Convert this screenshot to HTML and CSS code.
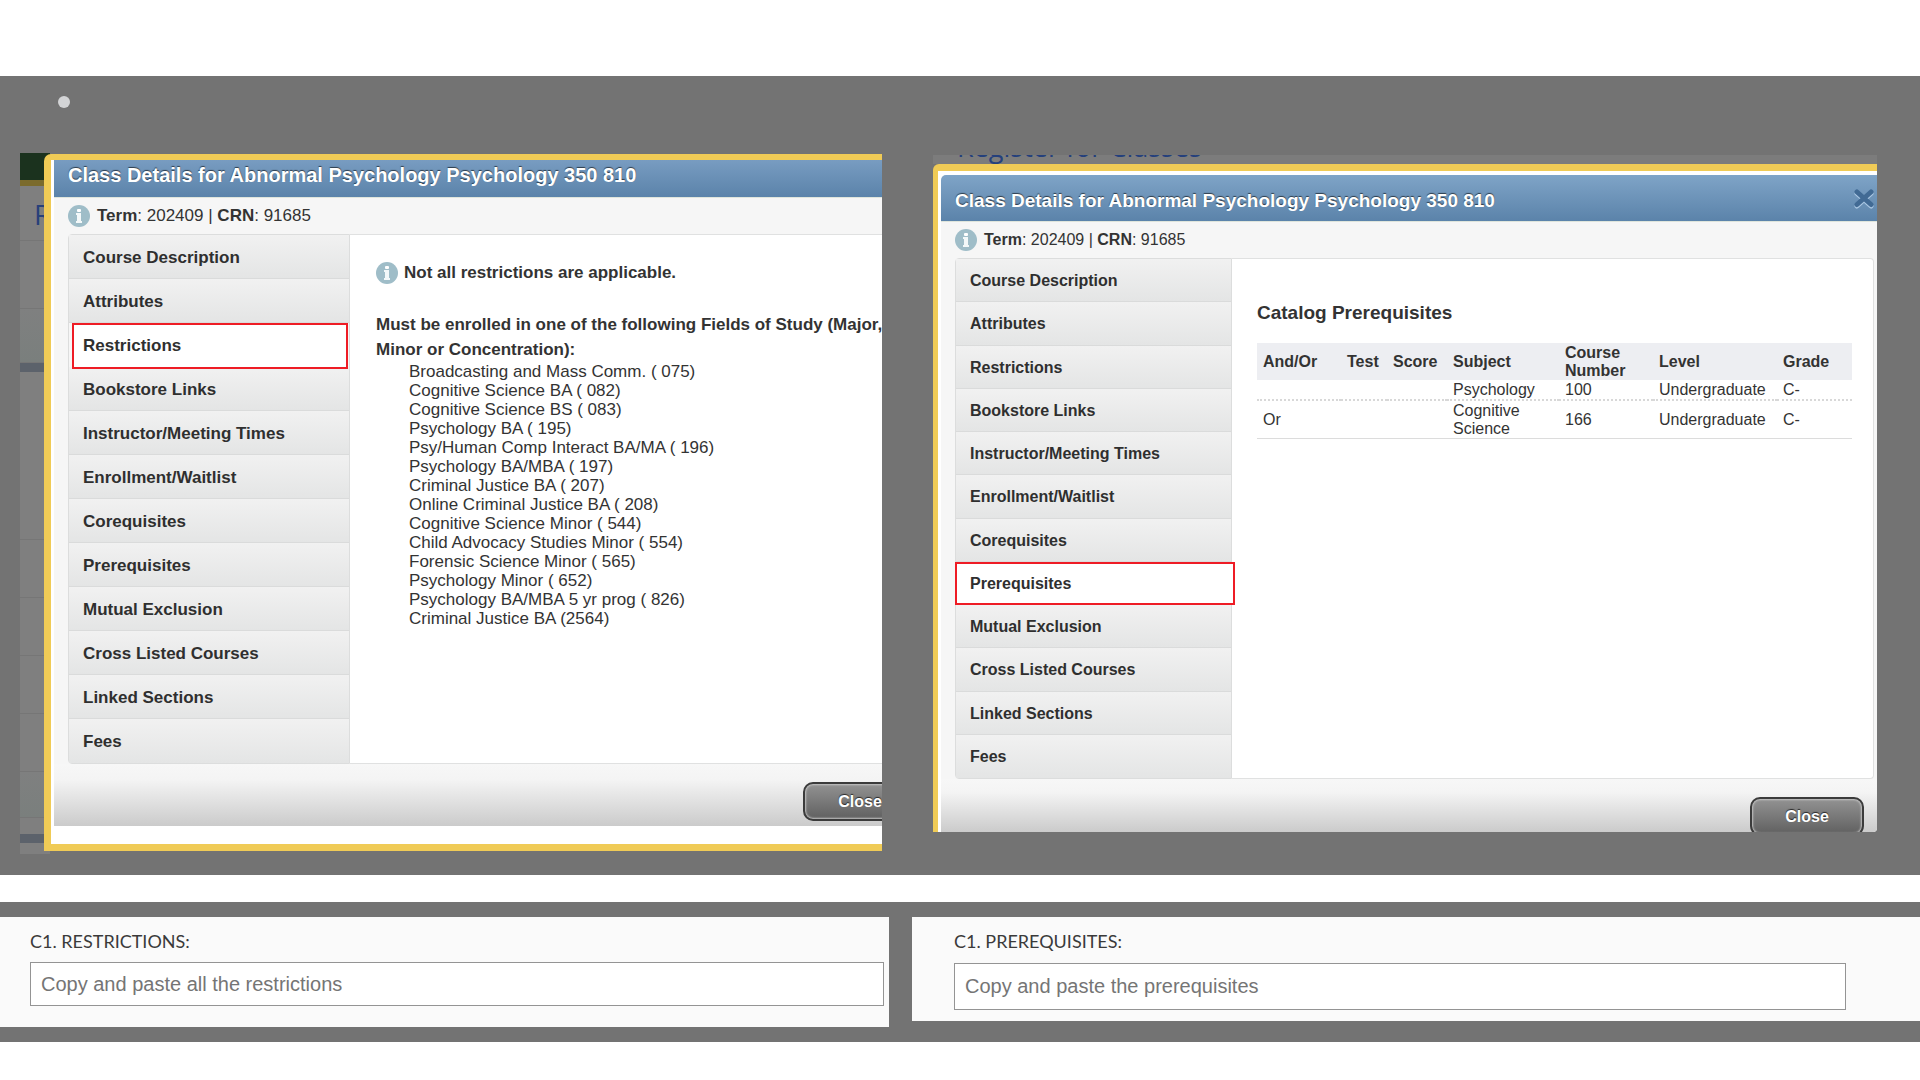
FILE: index.html
```
<!DOCTYPE html>
<html lang="en">
<head>
    <meta charset="UTF-8">
    <meta name="viewport" content="width=device-width, initial-scale=1.0">
    <title>Class Details - Restrictions and Prerequisites</title>
    <link rel="stylesheet" href="styles.css">
</head>
<body>
    <svg class="defs" width="0" height="0" aria-hidden="true">
        <symbol id="info" viewBox="0 0 22 22">
            <circle cx="11" cy="11" r="11" fill="#9fbdc8"/>
            <rect x="9" y="4" width="4" height="3" rx="1" fill="#fff"/>
            <path d="M8 8h5v8h1v2H8v-2h1v-6H8z" fill="#f3f8f9"/>
        </symbol>
    </svg>

    <main>
        <section class="band details">
            <div class="bullet-row"><span class="bullet"></span></div>

            <div class="shots">
                <!-- Restrictions -->
                <div class="shot shot-left">
                    <div class="backdrop" aria-hidden="true">
                        <div class="bd-top"></div>
                        <div class="bd-title">R</div>
                        <div class="bd-row bd-68"></div>
                        <div class="bd-row bd-55 tint"></div>
                        <div class="bd-bar"></div>
                        <div class="bd-row bd-168"></div>
                        <div class="bd-row bd-58"></div>
                        <div class="bd-row bd-58"></div>
                        <div class="bd-row bd-58"></div>
                        <div class="bd-row bd-58"></div>
                        <div class="bd-row bd-46 tint"></div>
                        <div class="bd-gap"></div>
                        <div class="bd-bar"></div>
                    </div>
                    <div class="dialog">
                        <header class="dialog-header">
                            <h2>Class Details for Abnormal Psychology Psychology 350 810</h2>
                        </header>
                        <p class="term"><svg class="info"><use href="#info"/></svg><span><b>Term</b>: 202409 | <b>CRN</b>: 91685</span></p>
                        <div class="dialog-body">
                            <nav class="tabs">
                                <a href="#">Course Description</a>
                                <a href="#">Attributes</a>
                                <a href="#" class="active">Restrictions</a>
                                <a href="#">Bookstore Links</a>
                                <a href="#">Instructor/Meeting Times</a>
                                <a href="#">Enrollment/Waitlist</a>
                                <a href="#">Corequisites</a>
                                <a href="#">Prerequisites</a>
                                <a href="#">Mutual Exclusion</a>
                                <a href="#">Cross Listed Courses</a>
                                <a href="#">Linked Sections</a>
                                <a href="#">Fees</a>
                            </nav>
                            <div class="panel">
                                <p class="notice"><svg class="info"><use href="#info"/></svg><b>Not all restrictions are applicable.</b></p>
                                <p class="rule">Must be enrolled in one of the following Fields of Study (Major, Minor or Concentration):</p>
                                <ul class="fields">
                                    <li>Broadcasting and Mass Comm. ( 075)</li>
                                    <li>Cognitive Science BA ( 082)</li>
                                    <li>Cognitive Science BS ( 083)</li>
                                    <li>Psychology BA ( 195)</li>
                                    <li>Psy/Human Comp Interact BA/MA ( 196)</li>
                                    <li>Psychology BA/MBA ( 197)</li>
                                    <li>Criminal Justice BA ( 207)</li>
                                    <li>Online Criminal Justice BA ( 208)</li>
                                    <li>Cognitive Science Minor ( 544)</li>
                                    <li>Child Advocacy Studies Minor ( 554)</li>
                                    <li>Forensic Science Minor ( 565)</li>
                                    <li>Psychology Minor ( 652)</li>
                                    <li>Psychology BA/MBA 5 yr prog ( 826)</li>
                                    <li>Criminal Justice BA (2564)</li>
                                </ul>
                            </div>
                        </div>
                        <footer class="dialog-footer"><button type="button" class="btn">Close</button></footer>
                    </div>
                </div>

                <!-- Prerequisites -->
                <div class="shot shot-right">
                    <div class="page-title">Register for Classes</div>
                    <div class="dialog">
                        <header class="dialog-header">
                            <h2>Class Details for Abnormal Psychology Psychology 350 810</h2>
                            <button type="button" class="close-x" aria-label="Close dialog">
                                <svg width="20" height="20" viewBox="0 0 20 20" fill="none" stroke-width="5" stroke-linecap="round">
                                    <path d="M3 4.500l14 12.500M17 4.500l-14 12.500" stroke="#a9c6e2"/>
                                    <path d="M3 3l14 12.500M17 3l-14 12.500" stroke="#416a94"/>
                                </svg>
                            </button>
                        </header>
                        <p class="term"><svg class="info"><use href="#info"/></svg><span><b>Term</b>: 202409 | <b>CRN</b>: 91685</span></p>
                        <div class="dialog-body">
                            <nav class="tabs">
                                <a href="#">Course Description</a>
                                <a href="#">Attributes</a>
                                <a href="#">Restrictions</a>
                                <a href="#">Bookstore Links</a>
                                <a href="#">Instructor/Meeting Times</a>
                                <a href="#">Enrollment/Waitlist</a>
                                <a href="#">Corequisites</a>
                                <a href="#" class="active">Prerequisites</a>
                                <a href="#">Mutual Exclusion</a>
                                <a href="#">Cross Listed Courses</a>
                                <a href="#">Linked Sections</a>
                                <a href="#">Fees</a>
                            </nav>
                            <div class="panel">
                                <h3>Catalog Prerequisites</h3>
                                <table class="prereqs">
                                    <colgroup>
                                        <col class="c-andor"><col class="c-test"><col class="c-score"><col class="c-subject"><col class="c-number"><col class="c-level"><col>
                                    </colgroup>
                                    <thead>
                                        <tr><th>And/Or</th><th>Test</th><th>Score</th><th>Subject</th><th>Course Number</th><th>Level</th><th>Grade</th></tr>
                                    </thead>
                                    <tbody>
                                        <tr><td></td><td></td><td></td><td>Psychology</td><td>100</td><td>Undergraduate</td><td>C-</td></tr>
                                        <tr><td>Or</td><td></td><td></td><td>Cognitive Science</td><td>166</td><td>Undergraduate</td><td>C-</td></tr>
                                    </tbody>
                                </table>
                            </div>
                        </div>
                        <footer class="dialog-footer"><button type="button" class="btn">Close</button></footer>
                    </div>
                </div>
            </div>
        </section>

        <form class="band fields-band">
            <div class="card card-left">
                <label for="restrictions">C1. RESTRICTIONS:</label>
                <input type="text" id="restrictions" placeholder="Copy and paste all the restrictions">
            </div>
            <div class="card card-right">
                <label for="prerequisites">C1. PREREQUISITES:</label>
                <input type="text" id="prerequisites" placeholder="Copy and paste the prerequisites">
            </div>
        </form>
    </main>
</body>
</html>
```
FILE: styles.css
```
* {
    box-sizing: border-box;
}
body {
    margin: 0;
    background: #fff;
    color: #333;
    font-family: "Liberation Sans", Arial, sans-serif;
    font-size: 16px;
}
h2, h3, p, ul {
    margin: 0;
    padding: 0;
}
.defs {
    display: block;
}
main {
    padding-top: 76px;
}
.band {
    background: #737373;
}
.details {
    padding: 0 43px 21px 20px;
    margin-bottom: 27px;
}
.bullet-row {
    height: 77px;
    padding: 20px 0 0 38px;
}
.bullet {
    display: block;
    width: 12px;
    height: 12px;
    border-radius: 50%;
    background: #d3d4d6;
}
.shots {
    display: grid;
    grid-template-columns: 862fr 944fr;
    gap: 51px;
    align-items: start;
}
.shot {
    overflow: hidden;
    min-width: 0;
}
.shot-left {
    display: flex;
    align-items: flex-start;
    font-size: 17px;
}
.shot-right {
    margin-top: 2px;
    border-radius: 0 0 4px 0;
}

/* dimmed page behind the left dialog */
.backdrop {
    flex: 0 0 30px;
    min-width: 0;
    background: #7f7f7f;
    padding-bottom: 11px;
}
.bd-top {
    height: 33px;
    background: #1b321e;
    border-bottom: 6px solid #7b6b2d;
}
.bd-title {
    height: 55px;
    padding: 9px 0 0 14px;
    border-bottom: 1px solid #767676;
    font: 28px/38px "Open Sans", sans-serif;
    color: #27407a;
}
.bd-row {
    border-bottom: 1px solid #767676;
}
.bd-68 { height: 68px; }
.bd-55 { height: 54px; }
.bd-168 { height: 168px; }
.bd-58 { height: 58px; }
.bd-46 { height: 46px; }
.bd-gap { height: 16px; }
.tint {
    background: linear-gradient(#7f8080, #7a7f7d);
}
.bd-bar {
    height: 9px;
    background: #5c626b;
}

/* dialog */
.dialog {
    border: 0 solid #f0cb56;
    background: #fff;
}
.shot-left .dialog {
    flex: none;
    width: calc(100% + 30px);
    margin: 1px 0 0 -6px;
    border-width: 6px 0 7px 7px;
    border-radius: 7px 0 0 0;
    padding: 0 0 18px 3px;
}
.shot-right .dialog {
    border-width: 7px 0 0 5px;
    border-radius: 6px 0 0 0;
    padding: 4px 0 0 3px;
}
.dialog-header {
    display: flex;
    justify-content: space-between;
    align-items: flex-start;
    padding: 0 3px 0 14px;
    border-bottom: 1px solid #dfe5dc;
    background: linear-gradient(#7fa4c7, #5b83aa);
    color: #fff;
}
.dialog-header h2 {
    font-size: 20px;
    line-height: 24px;
    text-shadow: 0 -1px 1px rgba(0, 0, 0, 0.6);
    white-space: nowrap;
}
.shot-left .dialog-header {
    height: 38px;
    padding-top: 3px;
    background: linear-gradient(#789cc1, #5b83aa);
}
.shot-right .dialog-header {
    height: 47px;
    padding-top: 14px;
    border-radius: 5px 0 0 0;
}
.shot-right .dialog-header h2 {
    font-size: 19px;
}
.close-x {
    padding: 0;
    border: 0;
    background: none;
    cursor: pointer;
}
.close-x svg {
    display: block;
}
.term {
    display: flex;
    align-items: center;
    gap: 7px;
    height: 36px;
    padding-left: 14px;
    background: #f6f6f6;
}
.info {
    flex: none;
    width: 22px;
    height: 22px;
}
.dialog-body {
    display: flex;
    padding-left: 14px;
    background: #f6f6f6;
}
.shot-right .dialog-body {
    padding-right: 3px;
}
.tabs {
    display: grid;
    grid-auto-rows: 1fr;
    flex: none;
    border: 1px solid #dcdddd;
    border-radius: 4px 0 0 4px;
}
.shot-left .tabs {
    width: 282px;
    height: 530px;
}
.shot-right .tabs {
    width: 277px;
    height: 521px;
}
.tabs a {
    display: flex;
    align-items: center;
    padding: 2px 0 0 14px;
    border-bottom: 1px solid #dadbdb;
    background: linear-gradient(#f1f1f1, #e4e5e5);
    color: #2f2f2f;
    font-weight: bold;
    text-decoration: none;
}
.tabs a:last-child {
    border-bottom: 0;
}
/* the outline runs over the neighbouring tab and the panel edge */
.tabs .active {
    position: relative;
    z-index: 1;
    border: 2px solid #ee1c25;
    background: #fff;
}
.shot-left .tabs .active {
    margin: 0 1px -2px 3px;
    padding: 0 0 0 9px;
}
.shot-right .tabs .active {
    margin: 0 -4px 0 -1px;
    padding-left: 13px;
}
.panel {
    flex: 1;
    border: 1px solid #e0e1e1;
    border-left: 0;
    background: #fff;
}
.shot-left .panel {
    padding: 24px 0 0 26px;
}
.shot-right .panel {
    padding: 42px 21px 0 25px;
    border-radius: 0 4px 4px 0;
}

/* restrictions */
.notice {
    display: flex;
    align-items: center;
    gap: 6px;
    height: 28px;
    margin-bottom: 25px;
}
.rule {
    max-width: 510px;
    font-weight: bold;
    line-height: 25px;
}
.fields {
    padding-left: 33px;
    list-style: none;
    line-height: 19px;
}

/* prerequisites */
.panel h3 {
    margin-bottom: 18px;
    font-size: 19px;
    line-height: 24px;
}
.prereqs {
    width: 100%;
    table-layout: fixed;
    border-collapse: collapse;
    line-height: 18px;
    text-align: left;
}
.prereqs th,
.prereqs td {
    padding: 1px 6px 0;
}
.prereqs th {
    background: #edeef2;
}
.prereqs tbody tr {
    border-bottom: 1px solid #dcdcdc;
}
.prereqs tbody tr:first-child {
    border-bottom: 2px dotted #d8d8d8;
}
.c-andor { width: 84px; }
.c-test { width: 46px; }
.c-score { width: 60px; }
.c-subject { width: 112px; }
.c-number { width: 94px; }
.c-level { width: 124px; }

.dialog-footer {
    display: flex;
    justify-content: flex-end;
    align-items: flex-start;
    padding-top: 18px;
    background: linear-gradient(#f7f7f7, #f4f4f4 25%, #cbcbcb);
}
.shot-left .dialog-footer {
    height: 62px;
    padding-right: 19px;
}
.shot-right .dialog-footer {
    height: 53px;
    padding-right: 13px;
}
.btn {
    flex: none;
    width: 114px;
    height: 39px;
    border: 2px solid #3b3b3b;
    border-radius: 10px;
    background: linear-gradient(#929292, #606060);
    box-shadow: inset 0 0 2px 1px #c4c4c4;
    color: #fff;
    font: bold 16px "Liberation Sans", Arial, sans-serif;
    text-shadow: 0 -1px 1px rgba(0, 0, 0, 0.7);
    cursor: pointer;
}
.page-title {
    display: flex;
    align-items: flex-end;
    height: 9px;
    padding-left: 24px;
    overflow: hidden;
    background: #7c7c7c;
    color: #24407c;
    font: 27px/35px "Open Sans", sans-serif;
}

/* form fields */
.fields-band {
    display: grid;
    grid-template-columns: 889fr 1008fr;
    gap: 23px;
    align-items: start;
    padding: 15px 0;
}
.card {
    background: #fafafa;
}
.card-left {
    padding: 11px 5px 21px 30px;
}
.card-right {
    padding: 11px 74px 11px 42px;
}
.card label {
    display: block;
    margin-bottom: 7px;
    font: 18px/27px Lato, sans-serif;
    color: #3a3a3a;
}
.card input {
    display: block;
    width: 100%;
    height: 44px;
    padding: 0 10px;
    border: 1px solid #949494;
    border-radius: 0;
    background: #fff;
    font: 20px "Liberation Sans", Arial, sans-serif;
}
.card-right label {
    margin-bottom: 8px;
}
.card-right input {
    height: 47px;
}
.card input::placeholder {
    color: #757575;
    opacity: 1;
}
```
